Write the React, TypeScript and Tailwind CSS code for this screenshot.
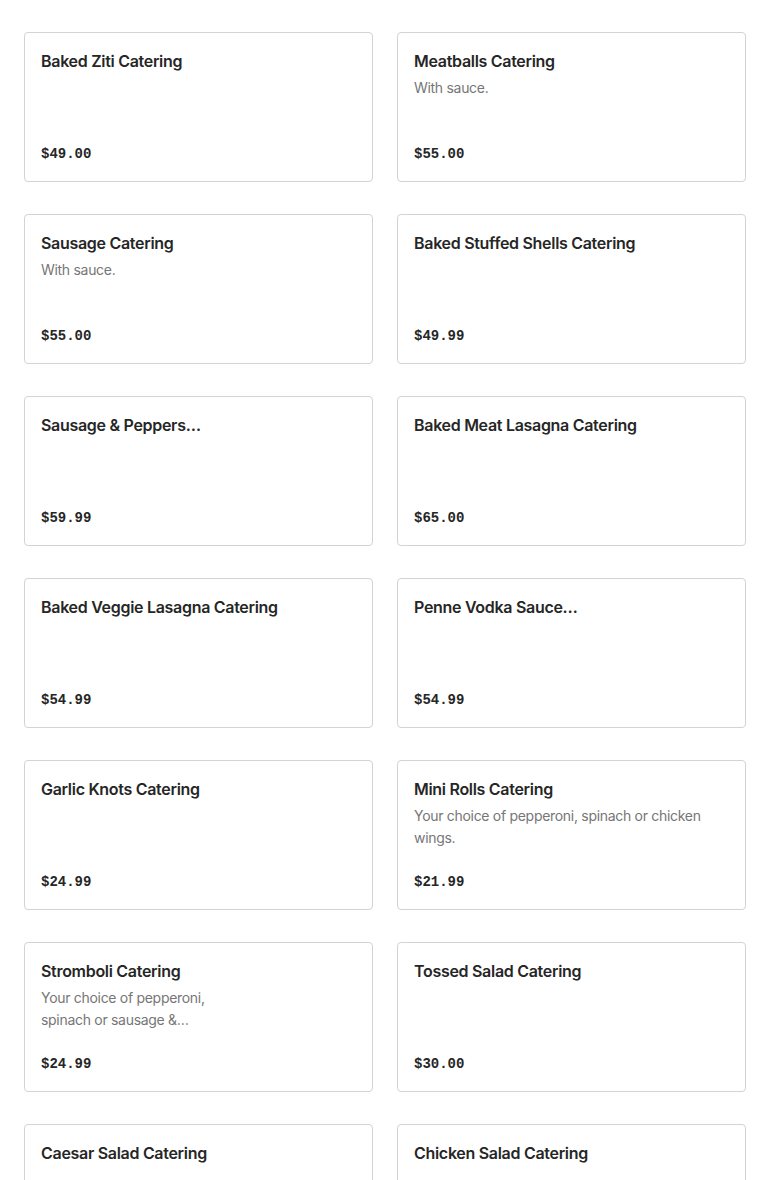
type Item = {
  name: string;
  desc?: string;
  price: string;
  narrow?: boolean;
};

const items: Item[] = [
  { name: "Baked Ziti Catering", price: "$49.00" },
  { name: "Meatballs Catering", desc: "With sauce.", price: "$55.00" },
  { name: "Sausage Catering", desc: "With sauce.", price: "$55.00" },
  { name: "Baked Stuffed Shells Catering", price: "$49.99" },
  { name: "Sausage & Peppers…", price: "$59.99" },
  { name: "Baked Meat Lasagna Catering", price: "$65.00" },
  { name: "Baked Veggie Lasagna Catering", price: "$54.99" },
  { name: "Penne Vodka Sauce…", price: "$54.99" },
  { name: "Garlic Knots Catering", price: "$24.99" },
  {
    name: "Mini Rolls Catering",
    desc: "Your choice of pepperoni, spinach or chicken wings.",
    price: "$21.99",
  },
  {
    name: "Stromboli Catering",
    desc: "Your choice of pepperoni, spinach or sausage &…",
    price: "$24.99",
    narrow: true,
  },
  { name: "Tossed Salad Catering", price: "$30.00" },
  { name: "Caesar Salad Catering", price: "$30.00" },
  { name: "Chicken Salad Catering", price: "$35.00" },
];

const MenuCard = ({ item }: { item: Item }) => {
  return (
    <div className="h-[150px] rounded border border-[#d3d3d3] bg-white p-4 flex flex-col justify-between">
      <div>
        <h3 className="text-[16px] leading-6 font-semibold tracking-[-0.3px] text-[#262626]">
          {item.name}
        </h3>
        {item.desc && (
          <p
            className={
              "mt-1 text-[14px] leading-[22px] tracking-[-0.3px] text-[#767676] " +
              (item.narrow ? "max-w-[200px]" : "")
            }
          >
            {item.desc}
          </p>
        )}
      </div>
      <span className="font-['Liberation_Mono',monospace] text-[14px] leading-[22px] font-bold text-[#262626]">
        {item.price}
      </span>
    </div>
  );
};

export default function App() {
  return (
    <div className="bg-white min-h-screen px-6 pt-8 font-['Inter',sans-serif] overflow-hidden">
      <div className="grid grid-cols-2 gap-x-6 gap-y-8">
        {items.map((item) => (
          <MenuCard key={item.name} item={item} />
        ))}
      </div>
    </div>
  );
}
